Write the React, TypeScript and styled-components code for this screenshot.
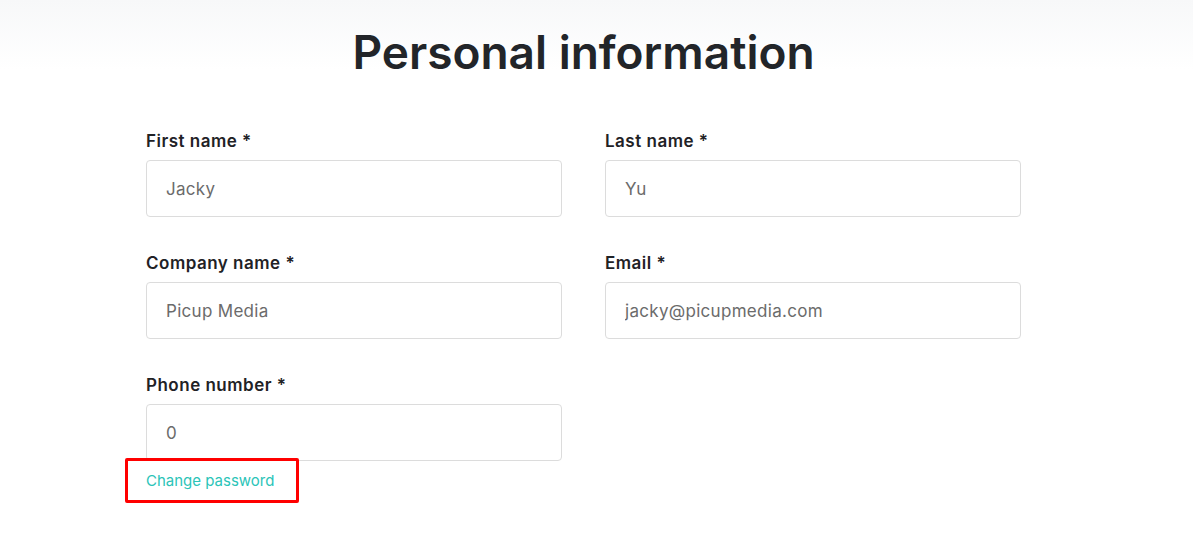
import styled, { createGlobalStyle } from "styled-components";

const GlobalStyle = createGlobalStyle`
	html, body {
		margin: 0;
		padding: 0;
		background: #ffffff;
		font-family: "Inter", "Noto Sans", sans-serif;
	}
`;

const Page = styled.div`
	min-height: 551px;
	background: linear-gradient(to bottom, #f7f8f9 0px, #ffffff 70px);
	display: flex;
	justify-content: flex-start;
	padding-left: 146px;
	box-sizing: border-box;
`;

const Content = styled.div`
	width: 875px;
	display: flex;
	flex-direction: column;
`;

const Title = styled.h1`
	margin: 24px 0 0;
	text-align: center;
	font-size: 46px;
	font-weight: 600;
	letter-spacing: 0;
	color: #222529;
	line-height: 56px;
`;

const FormGrid = styled.div`
	margin-top: 50px;
	display: grid;
	grid-template-columns: 416px 416px;
	column-gap: 43px;
	row-gap: 35px;
`;

const Field = styled.div`
	display: flex;
	flex-direction: column;
`;

const Label = styled.label`
	font-size: 17px;
	font-weight: 600;
	color: #1f2226;
	line-height: 22px;
	margin-bottom: 8px;
	letter-spacing: 0.5px;
`;

const Input = styled.input`
	height: 57px;
	box-sizing: border-box;
	border: 1px solid #dcdcdc;
	border-radius: 4px;
	padding: 0 19px;
	font-family: inherit;
	font-size: 17px;
	letter-spacing: 0.3px;
	color: #6b6b6b;
	background: #ffffff;
	outline: none;
`;

const LinkWrap = styled.div`
	position: relative;
	align-self: flex-start;
	margin-top: 9px;

	&::after {
		content: "";
		position: absolute;
		left: -21px;
		top: -12px;
		width: 168px;
		height: 39px;
		border: 3px solid #ff0000;
		border-radius: 2px;
		pointer-events: none;
	}
`;

const TextLink = styled.a`
	font-size: 15px;
	color: #2bc4b8;
	text-decoration: none;
	line-height: 20px;
	cursor: pointer;
`;

const fields = [
	{ label: "First name *", value: "Jacky" },
	{ label: "Last name *", value: "Yu" },
	{ label: "Company name *", value: "Picup Media" },
	{ label: "Email *", value: "jacky@picupmedia.com" },
];

export default function App() {
	return (
		<>
			<GlobalStyle />
			<Page>
				<Content>
					<Title>Personal information</Title>
					<FormGrid>
						{fields.map((f) => (
							<Field key={f.label}>
								<Label>{f.label}</Label>
								<Input defaultValue={f.value} />
							</Field>
						))}
						<Field>
							<Label>Phone number *</Label>
							<Input defaultValue="0" />
							<LinkWrap>
								<TextLink>Change password</TextLink>
							</LinkWrap>
						</Field>
					</FormGrid>
				</Content>
			</Page>
		</>
	);
}
